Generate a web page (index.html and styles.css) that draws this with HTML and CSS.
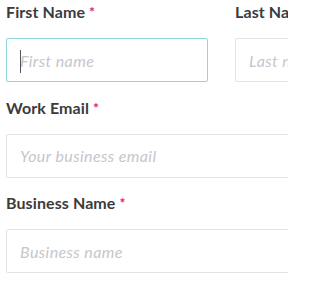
FILE: index.html
```html
<!DOCTYPE html>
<html lang="en">
<head>
<meta charset="utf-8">
<title>Form</title>
<link rel="stylesheet" href="styles.css">
</head>
<body>
<div class="page">
<form class="form">
  <div class="field">
    <label class="label" for="fn">First Name <span class="req">*</span></label>
    <div class="control">
      <input class="input focused" id="fn" type="text" placeholder="First name">
      <span class="caret"></span>
    </div>
  </div>
  <div class="field">
    <label class="label" for="ln">Last Name <span class="req">*</span></label>
    <div class="control">
      <input class="input" id="ln" type="text" placeholder="Last name">
    </div>
  </div>
  <div class="field wide">
    <label class="label" for="em">Work Email <span class="req">*</span></label>
    <div class="control">
      <input class="input" id="em" type="email" placeholder="Your business email">
    </div>
  </div>
  <div class="field wide">
    <label class="label" for="bn">Business Name <span class="req">*</span></label>
    <div class="control">
      <input class="input" id="bn" type="text" placeholder="Business name">
    </div>
  </div>
</form>
</div>
</body>
</html>
```
FILE: styles.css
```css
html, body {
  margin: 0;
  padding: 0;
  background: #ffffff;
}
body {
  font-family: Lato, "Noto Sans", sans-serif;
}
.page {
  width: 288px;
  height: 288px;
  overflow: hidden;
}
.form {
  width: 431px;
  padding: 2px 0 0 6px;
  display: grid;
  grid-template-columns: 202px 202px;
  column-gap: 27px;
  row-gap: 15.5px;
}
.field {
  display: flex;
  flex-direction: column;
  min-width: 0;
}
.field.wide {
  grid-column: 1 / span 2;
}
.label {
  font-size: 16px;
  line-height: 20px;
  font-weight: 700;
  letter-spacing: 0.1px;
  color: #3b3b3d;
  margin-bottom: 16px;
  white-space: nowrap;
}
.req {
  color: #e0245e;
  font-size: 14px;
  vertical-align: 1px;
}
.control {
  position: relative;
}
.input {
  box-sizing: border-box;
  width: 100%;
  height: 44px;
  margin: 0;
  padding: 0 13px;
  border: 1px solid #e3e3e5;
  border-radius: 2px;
  background: #ffffff;
  font-family: Lato, "Noto Sans", sans-serif;
  font-size: 16px;
  letter-spacing: 0.4px;
  color: #3b3b3d;
  outline: none;
}
.input.focused {
  border-color: #8ed7dc;
}
.input::placeholder {
  color: #c6c6cb;
  font-style: italic;
}
.caret {
  position: absolute;
  left: 14px;
  top: 12px;
  width: 1px;
  height: 23px;
  background: #555555;
}
```
